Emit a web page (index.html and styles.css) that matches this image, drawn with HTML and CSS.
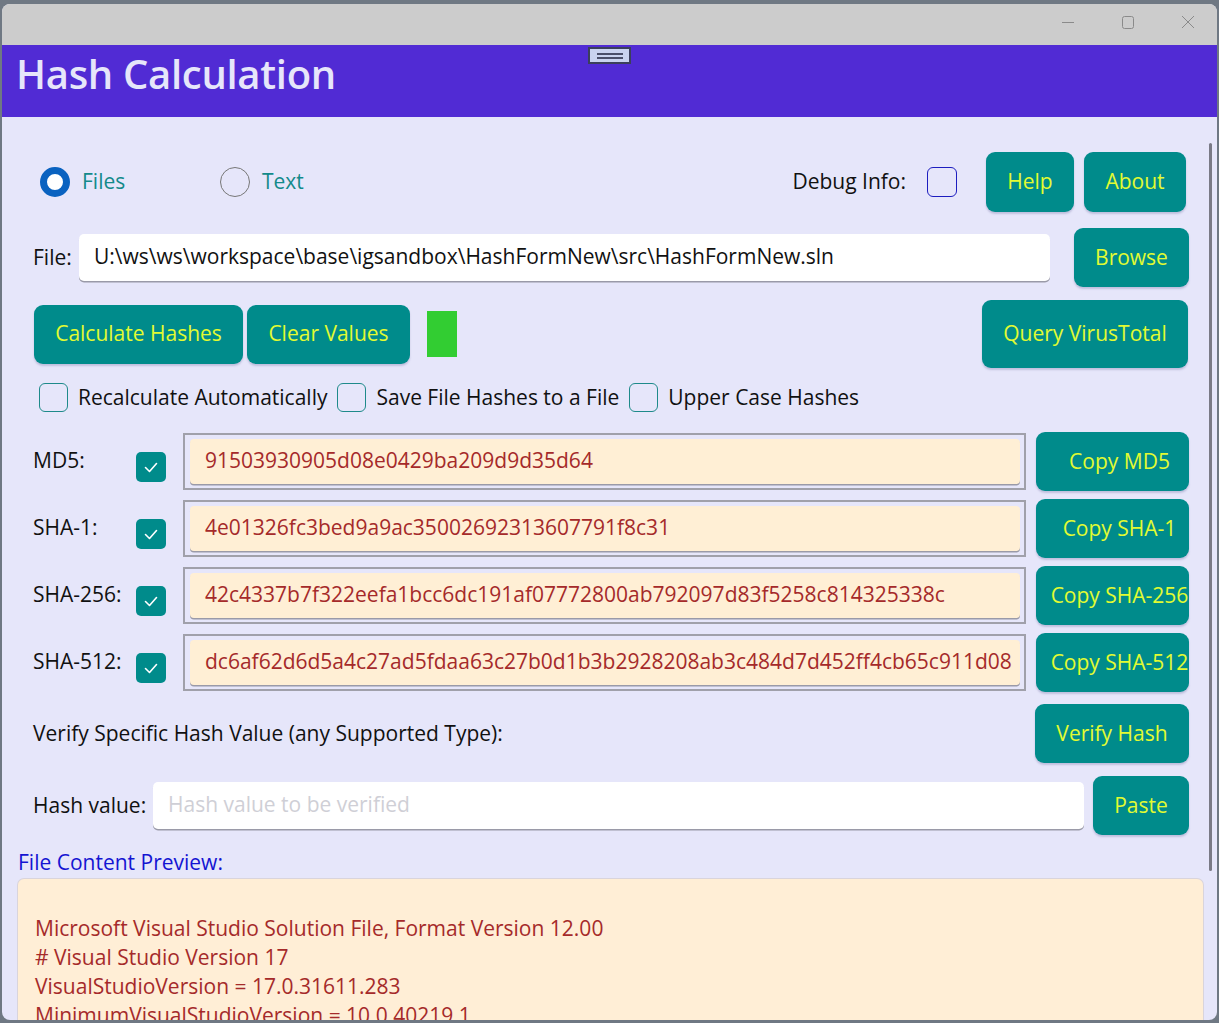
FILE: index.html
```html
<!DOCTYPE html>
<html lang="en">
<head>
<meta charset="utf-8">
<title>Hash Calculation</title>
<link rel="stylesheet" href="styles.css">
</head>
<body>
<div class="window">
  <div class="titlebar">
    <div class="controls">
      <svg class="ctl" width="16" height="16" viewBox="0 0 16 16"><line x1="2" y1="8.5" x2="14" y2="8.5" stroke="#8a8a8a" stroke-width="1"/></svg>
      <svg class="ctl" width="16" height="16" viewBox="0 0 16 16"><rect x="2.5" y="2.5" width="11" height="12" rx="2" fill="none" stroke="#8a8a8a" stroke-width="1"/></svg>
      <svg class="ctl" width="16" height="16" viewBox="0 0 16 16"><path d="M2 2 L14 14 M14 2 L2 14" stroke="#8a8a8a" stroke-width="1"/></svg>
    </div>
  </div>
  <div class="header">
    <h1 class="title">Hash Calculation</h1>
    <div class="handle"><span></span><span></span></div>
  </div>
  <div class="content">
    <div class="scrollbar"></div>

    <div class="row row-top">
      <div class="radios">
        <label class="radio"><span class="dot on"></span><span class="rlabel">Files</span></label>
        <label class="radio"><span class="dot"></span><span class="rlabel">Text</span></label>
      </div>
      <div class="top-right">
        <span class="txt">Debug Info:</span>
        <span class="debug-box"></span>
        <button class="btn btn-help">Help</button>
        <button class="btn btn-about">About</button>
      </div>
    </div>

    <div class="row row-file">
      <span class="txt file-label">File:</span>
      <div class="input file-input">U:\ws\ws\workspace\base\igsandbox\HashFormNew\src\HashFormNew.sln</div>
      <button class="btn btn-browse">Browse</button>
    </div>

    <div class="row row-actions">
      <button class="btn btn-calc">Calculate Hashes</button>
      <button class="btn btn-clear">Clear Values</button>
      <span class="status"></span>
      <button class="btn btn-vt">Query VirusTotal</button>
    </div>

    <div class="row row-checks">
      <label class="check"><span class="cbox"></span><span class="txt">Recalculate Automatically</span></label>
      <label class="check"><span class="cbox"></span><span class="txt">Save File Hashes to a File</span></label>
      <label class="check"><span class="cbox"></span><span class="txt">Upper Case Hashes</span></label>
    </div>

    <div class="hashes">
      <div class="hrow">
        <span class="txt hlabel">MD5:</span>
        <span class="cbox checked"><svg width="30" height="30" viewBox="0 0 30 30"><polyline points="9.5,15.5 13.5,19.5 20.5,11.5" fill="none" stroke="#fff" stroke-width="1.6" stroke-linecap="round" stroke-linejoin="round"/></svg></span>
        <div class="hframe"><div class="hfield">91503930905d08e0429ba209d9d35d64</div></div>
        <button class="btn btn-copy">Copy MD5</button>
      </div>
      <div class="hrow">
        <span class="txt hlabel">SHA-1:</span>
        <span class="cbox checked"><svg width="30" height="30" viewBox="0 0 30 30"><polyline points="9.5,15.5 13.5,19.5 20.5,11.5" fill="none" stroke="#fff" stroke-width="1.6" stroke-linecap="round" stroke-linejoin="round"/></svg></span>
        <div class="hframe"><div class="hfield">4e01326fc3bed9a9ac35002692313607791f8c31</div></div>
        <button class="btn btn-copy">Copy SHA-1</button>
      </div>
      <div class="hrow">
        <span class="txt hlabel">SHA-256:</span>
        <span class="cbox checked"><svg width="30" height="30" viewBox="0 0 30 30"><polyline points="9.5,15.5 13.5,19.5 20.5,11.5" fill="none" stroke="#fff" stroke-width="1.6" stroke-linecap="round" stroke-linejoin="round"/></svg></span>
        <div class="hframe"><div class="hfield">42c4337b7f322eefa1bcc6dc191af07772800ab792097d83f5258c814325338c</div></div>
        <button class="btn btn-copy">Copy SHA-256</button>
      </div>
      <div class="hrow">
        <span class="txt hlabel">SHA-512:</span>
        <span class="cbox checked"><svg width="30" height="30" viewBox="0 0 30 30"><polyline points="9.5,15.5 13.5,19.5 20.5,11.5" fill="none" stroke="#fff" stroke-width="1.6" stroke-linecap="round" stroke-linejoin="round"/></svg></span>
        <div class="hframe"><div class="hfield">dc6af62d6d5a4c27ad5fdaa63c27b0d1b3b2928208ab3c484d7d452ff4cb65c911d08</div></div>
        <button class="btn btn-copy">Copy SHA-512</button>
      </div>
    </div>

    <div class="row row-verify">
      <span class="txt">Verify Specific Hash Value (any Supported Type):</span>
      <button class="btn btn-verify">Verify Hash</button>
    </div>

    <div class="row row-hv">
      <span class="txt hv-label">Hash value:</span>
      <div class="input hv-input placeholder">Hash value to be verified</div>
      <button class="btn btn-paste">Paste</button>
    </div>

    <div class="preview-label">File Content Preview:</div>
    <div class="preview">
      <div class="pline">&nbsp;</div>
      <div class="pline">Microsoft Visual Studio Solution File, Format Version 12.00</div>
      <div class="pline"># Visual Studio Version 17</div>
      <div class="pline">VisualStudioVersion = 17.0.31611.283</div>
      <div class="pline">MinimumVisualStudioVersion = 10.0.40219.1</div>
    </div>
  </div>
</div>
</body>
</html>
```

FILE: styles.css
```css
* { box-sizing: border-box; }
html, body { margin: 0; padding: 0; }
body {
  background: #6f7883;
  width: 1219px;
  height: 1023px;
  overflow: hidden;
  font-family: "Open Sans", "Noto Sans", sans-serif;
  font-size: 21px;
  line-height: 28px;
}
.window {
  margin: 4px 2px 0 2px;
  height: 1016px;
  border-radius: 8px;
  overflow: hidden;
  background: #e6e6fa;
  display: flex;
  flex-direction: column;
}
.titlebar {
  height: 41px;
  background: #cccccc;
  display: flex;
  justify-content: flex-end;
  align-items: center;
  flex: none;
}
.controls {
  display: flex;
  gap: 44px;
  margin-right: 21px;
  margin-top: -5px;
}
.header {
  height: 72px;
  background: #512bd4;
  flex: none;
  position: relative;
  padding-left: 14px;
  display: flex;
  align-items: center;
}
.title {
  margin: 0;
  font-size: 40px;
  line-height: 50px;
  font-weight: 600;
  color: #e6e6fa;
  letter-spacing: -0.3px;
  margin-top: -14px;
}
.handle {
  position: absolute;
  left: 586px;
  top: 2px;
  width: 43px;
  height: 17px;
  background: #c9d3f0;
  border: 2px solid #3b3f5c;
  display: flex;
  flex-direction: column;
  justify-content: center;
  align-items: center;
  gap: 2px;
}
.handle span {
  display: block;
  width: 26px;
  height: 2px;
  background: #4a4f6a;
}
.content {
  position: relative;
  flex: 1;
  padding: 0 28px 0 31px;
}
.scrollbar {
  position: absolute;
  left: 1207px;
  top: 26px;
  width: 3px;
  height: 728px;
  background: #7a7a86;
  border-radius: 2px;
}
.row {
  display: flex;
  align-items: center;
}
.txt { color: #111; white-space: nowrap; }
.btn {
  border: none;
  background: #008b8b;
  color: #e2fb32;
  font-family: inherit;
  font-size: 21px;
  line-height: 28px;
  border-radius: 9px;
  height: 59px;
  padding: 0 0 2px 0;
  box-shadow: 0 2px 2px rgba(120,120,170,0.35);
  white-space: nowrap;
}

/* row 1 */
.row-top {
  margin-top: 35px;
  height: 60px;
  justify-content: space-between;
}
.radios { display: flex; padding-left: 7px; }
.radio {
  width: 180px;
  display: flex;
  align-items: center;
  gap: 12px;
}
.dot {
  width: 30px;
  height: 30px;
  border-radius: 50%;
  border: 1.5px solid #777;
  background: #e6e6fa;
}
.dot.on {
  border: 7px solid #0a62c0;
  background: #fff;
}
.rlabel { color: #138a8a; margin-top: -2px; }
.top-right {
  display: flex;
  align-items: center;
  margin-right: 3px;
}
.top-right .txt { margin-top: -2px; }
.debug-box {
  width: 30px;
  height: 30px;
  border: 1.5px solid #1d1dbf;
  border-radius: 6px;
  margin-left: 21px;
  margin-right: 29px;
}
.btn-help { width: 88px; height: 60px; margin-right: 10px; }
.btn-about { width: 102px; height: 60px; }

/* row 2 */
.row-file { margin-top: 16px; height: 59px; }
.file-label { width: 46px; margin-top: -2px; }
.input {
  background: #fff;
  border-radius: 5px;
  height: 47px;
  display: flex;
  align-items: center;
  padding-left: 15px;
  padding-bottom: 3px;
  box-shadow: 0 1.5px 0 #9a9aa8;
  white-space: nowrap;
  overflow: hidden;
  color: #111;
}
.file-input { width: 971px; margin-right: 24px; }
.btn-browse { width: 115px; }

/* row 3 */
.row-actions { margin-top: 13px; height: 68px; padding-left: 1px; }
.btn-calc { width: 209px; margin-right: 4px; }
.btn-clear { width: 163px; margin-right: 17px; }
.status { width: 30px; height: 46px; background: #32cd32; }
.btn-vt { width: 206px; height: 68px; margin-left: auto; margin-right: 1px; }

/* row 4 */
.row-checks { margin-top: 15px; height: 29px; padding-left: 6px; gap: 10px; }
.check { display: flex; align-items: center; gap: 10px; }
.check .txt { margin-top: -2px; }
.cbox {
  width: 29px;
  height: 29px;
  border: 1.5px solid #1e8a8a;
  border-radius: 6px;
  display: inline-block;
  flex: none;
}

/* hashes */
.hashes {
  margin-top: 20px;
  display: flex;
  flex-direction: column;
  gap: 8px;
}
.hrow {
  display: grid;
  grid-template-columns: 103px 30px 860px 163px;
  align-items: center;
  height: 59px;
}
.hlabel { margin-top: -4px; }
.cbox.checked {
  width: 30px;
  height: 30px;
  border: none;
  background: #008b8b;
  margin-top: 11px;
  border-radius: 5px;
}
.cbox.checked svg { display: block; }
.hframe {
  width: 843px;
  height: 57px;
  border: 2px solid #a0a0aa;
  padding: 4px 4px 4px 5px;
  justify-self: start;
  margin-left: 17px;
}
.hfield {
  height: 45px;
  background: #ffefd5;
  border-radius: 4px;
  box-shadow: 0 1.5px 0 #9a9aa8;
  color: #a52a2a;
  display: flex;
  align-items: center;
  padding-left: 15px;
  padding-bottom: 4px;
  white-space: nowrap;
  overflow: hidden;
}
.btn-copy {
  width: 153px;
  margin-left: 10px;
  padding-left: 14px;
  overflow: hidden;
  text-align: center;
}

/* verify */
.row-verify { margin-top: 12px; height: 59px; justify-content: space-between; }
.row-verify .txt { margin-top: -2px; }
.btn-verify { width: 154px; }
.row-hv { margin-top: 13px; height: 59px; }
.hv-label { width: 120px; margin-top: -2px; }
.hv-input { width: 931px; margin-right: 9px; }
.placeholder { color: #cfcfd6; }
.btn-paste { width: 96px; }

/* preview */
.preview-label {
  color: #1414d2;
  margin-left: -15px;
  margin-top: 13px;
  line-height: 29px;
}
.preview {
  margin-left: -15px;
  margin-top: 2px;
  width: 1185px;
  height: 200px;
  background: #ffeed6;
  border-radius: 6px;
  box-shadow: 0 0 0 1px #d9d4dc;
  padding: 6px 17px;
  color: #a52a2a;
}
.pline { line-height: 29px; white-space: nowrap; }
```
